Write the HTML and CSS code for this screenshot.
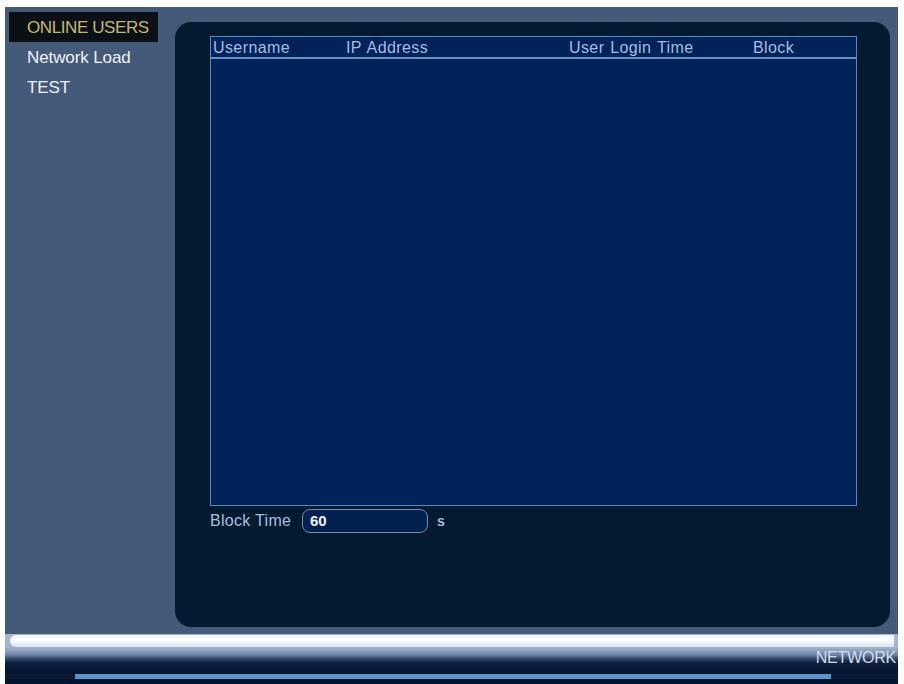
FILE: index.html
```html
<!DOCTYPE html>
<html>
<head>
<meta charset="utf-8">
<link rel="stylesheet" href="styles.css">
</head>
<body>
<div class="frame">
  <div class="top">
    <nav class="menu">
      <div class="item selected">ONLINE USERS</div>
      <div class="item">Network Load</div>
      <div class="item">TEST</div>
    </nav>
    <main class="panel">
      <div class="table">
        <div class="thead">
          <div class="c1">Username</div>
          <div class="c2">IP Address</div>
          <div class="c3">User Login Time</div>
          <div class="c4">Block</div>
        </div>
      </div>
      <div class="blockrow">
        <span class="label">Block Time</span>
        <div class="input">60</div>
        <span class="unit">s</span>
      </div>
    </main>
  </div>
  <div class="bar">
    <div class="gloss"></div>
    <div class="bar-body"><span class="title">NETWORK</span></div>
    <div class="baseline"><div class="seg-l"></div><div class="seg-m"></div><div class="seg-r"></div></div>
  </div>
</div>
</body>
</html>
```
FILE: styles.css
```css
html, body {
  margin: 0;
  padding: 0;
  background: #ffffff;
}
body {
  font-family: "Liberation Sans", Arial, sans-serif;
  width: 904px;
  height: 684px;
  overflow: hidden;
}
.frame {
  margin: 7px 0 0 5px;
  width: 893px;
  height: 677px;
  background: #435a79;
  display: flex;
  flex-direction: column;
}
.top {
  display: flex;
  height: 621px;
}
.menu {
  width: 170px;
  padding: 5px 0 0 4px;
  box-sizing: border-box;
}
.item {
  width: 149px;
  height: 30px;
  line-height: 31px;
  padding-left: 18px;
  box-sizing: border-box;
  font-size: 17px;
  color: #eef2f7;
  letter-spacing: -0.1px;
}
.item.selected {
  background: #0b1017;
  color: #c9b76c;
  letter-spacing: -0.4px;
}
.panel {
  margin-top: 15px;
  width: 715px;
  height: 605px;
  background: #031a31;
  border-radius: 16px;
  padding: 14px 0 0 35px;
  box-sizing: border-box;
}
.table {
  width: 647px;
  height: 470px;
  box-sizing: border-box;
  border: 1px solid #5489c0;
  background: #02225a;
}
.thead {
  display: flex;
  height: 20px;
  line-height: 21px;
  border-bottom: 2px solid #5f93c8;
  color: #a3bfe0;
  font-size: 16px;
  letter-spacing: 0.4px;
  word-spacing: 1px;
  padding-left: 2px;
}
.c1 { width: 133px; }
.c2 { width: 223px; }
.c3 { width: 184px; }
.c4 { width: 80px; }
.blockrow {
  display: flex;
  align-items: center;
  margin-top: 3px;
  height: 24px;
  font-size: 16px;
  color: #a9bfdc;
}
.label {
  width: 92px;
  letter-spacing: 0.3px;
}
.input {
  width: 126px;
  height: 24px;
  box-sizing: border-box;
  border: 1px solid #6f8fb7;
  border-radius: 8px;
  background: #02214f;
  color: #eef3fa;
  font-weight: bold;
  font-size: 15px;
  line-height: 22px;
  padding-left: 7px;
}
.unit {
  margin-left: 9px;
  font-size: 14px;
  font-weight: bold;
}
.bar {
  height: 56px;
  display: flex;
  flex-direction: column;
  background: linear-gradient(to bottom, #435a79 0, #435a79 6px, #a7b8ce 6px, #a2b5cd 19px, #8aa0bd 23px, #6a82a3 27px, #2c4364 31px, #0d1f3c 35px, #031431 46px);
}
.gloss {
  margin: 7px 4px 0 5px;
  height: 12px;
  border-radius: 6px 0 0 6px;
  background: linear-gradient(to bottom, #f2f7fc 0, #ffffff 40%, #d6e2ee 100%);
}
.bar-body {
  flex: 1;
  display: flex;
  justify-content: flex-end;
  align-items: flex-start;
}
.title {
  font-size: 16px;
  color: #d4dde8;
  letter-spacing: -0.2px;
  padding-right: 2px;
  margin-top: 2px;
}
.baseline {
  display: flex;
  height: 5px;
  margin-bottom: 5px;
}
.seg-l {
  width: 70px;
  background: #0c1b33;
}
.seg-m {
  flex: 1;
  background: #5994cc;
}
.seg-r {
  width: 67px;
  background: #0c1b33;
}
```
